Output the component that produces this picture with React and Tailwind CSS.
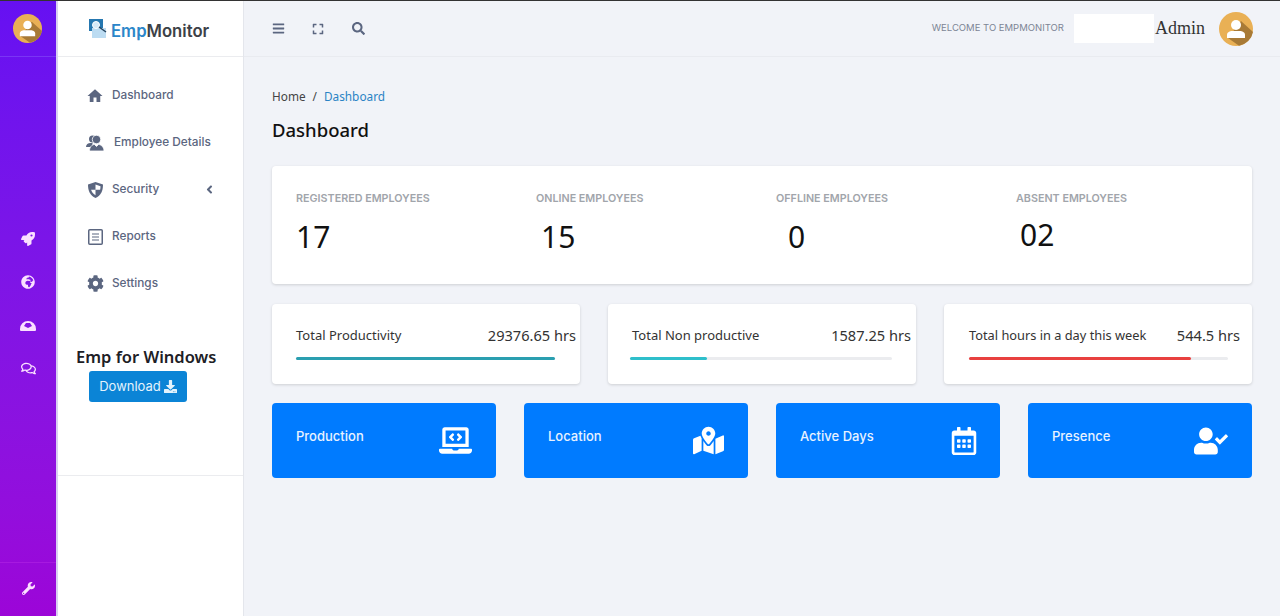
import {
    FaAngleLeft, FaBars, FaCog, FaDownload, FaExpand, FaGlobeAfrica, FaLaptopCode,
    FaMapMarkedAlt, FaRegCalendarAlt, FaRegComments, FaRocket, FaSearch,
    FaUserCheck, FaWrench,
} from 'react-icons/fa'
import { MdHome } from 'react-icons/md'

function Avatar({ size }) {
    return (
        <svg width={size} height={size} viewBox="0 0 34 34" className="shrink-0">
            <circle cx="17" cy="17" r="17" fill="#e9b055" />
            <path d="M9 26 L22 9 L34 20 A17 17 0 0 1 20 33.700 Z" fill="#a87a36" />
            <circle cx="17" cy="13" r="5" fill="#fff" />
            <path d="M8 26 v-3 c0-3 3-4 5-4 h8 c2 0 5 1 5 4 v3 z" fill="#fff" />
        </svg>
    )
}

function Logo() {
    return (
        <svg width="18" height="20" viewBox="0 0 18 20" className="shrink-0">
            <rect x="0" y="0" width="14" height="12" fill="#2577b0" />
            <rect x="3" y="9" width="14" height="10" fill="#bcdcf2" />
            <circle cx="7" cy="6" r="3.500" fill="#d5e9f7" stroke="#fff" />
            <path d="M10 8 L17 13" stroke="#24435e" strokeWidth="1.500" />
        </svg>
    )
}

function ShieldIcon() {
    return (
        <svg width="15" height="16" viewBox="0 0 15 16">
            <path d="M7.500 0 L15 2.500 C15 9 13 13.500 7.500 16 C2 13.500 0 9 0 2.500 Z" fill="currentColor" />
            <path d="M7.500 2.500 L12.500 4.200 C12.500 5.500 12.400 6.700 12.100 7.800 H7.500 Z M7.500 7.800 V13.300 C5 11.900 3.700 10 3.100 7.800 Z" fill="#fff" />
        </svg>
    )
}

function ReportIcon() {
    return (
        <svg width="15" height="16" viewBox="0 0 15 16" fill="none" stroke="currentColor">
            <rect x="0.750" y="0.750" width="13.500" height="14.500" rx="1" strokeWidth="1.500" />
            <path d="M4 5 H11 M4 8 H11 M4 11 H11" strokeWidth="1.200" />
        </svg>
    )
}

function EmployeeIcon() {
    return (
        <svg width="18" height="17" viewBox="0 0 18 17" fill="currentColor">
            <circle cx="6.500" cy="5" r="3.500" />
            <path d="M0 13 c0-2.500 2-4 4.500-4 h2 v4 z" />
            <circle cx="10.500" cy="5.500" r="4.200" stroke="#fff" strokeWidth="0.800" />
            <path d="M3.500 17 c0-4 2.500-6.500 5-6.500 l2 2 l2 -2 c2.500 0 5.500 2.500 5.500 6.500 z" stroke="#fff" strokeWidth="0.800" />
        </svg>
    )
}

function NavItem({ icon, label, gap, chevron }) {
    return (
        <div className="flex items-center h-[47px] pl-[28px] pr-[27px] text-[#5b6680]">
            <div className="w-[18px] flex justify-center text-[15px] shrink-0">{icon}</div>
            <span className={`${gap} whitespace-nowrap text-[11.800px] font-medium`}>{label}</span>
            {chevron && <FaAngleLeft className="ml-auto text-[13px]" />}
        </div>
    )
}

function Stat({ title, value, valueClass }) {
    return (
        <div>
            <div className="whitespace-nowrap text-[10.750px] font-semibold text-[#a1a5ab] uppercase">{title}</div>
            <div className={`${valueClass} text-[30px] leading-[40px] text-[#111] font-['Noto_Sans',sans-serif]`}>{value}</div>
        </div>
    )
}

function HoursCard({ title, hours, bar, width, pad, track, titleSize }) {
    return (
        <div className={`min-w-0 h-20 bg-white rounded-sm shadow-[0_1px_3px_rgba(0,0,0,0.15)] pt-[21px] ${pad}`}>
            <div className="flex justify-between items-center h-[22px] font-['Noto_Sans',sans-serif] text-[#333]">
                <span className={`${titleSize} whitespace-nowrap`}>{title}</span>
                <span className="text-[14.600px] whitespace-nowrap">{hours}</span>
            </div>
            <div className={`mt-[10px] h-[3px] bg-[#ebecef] rounded-full ${track}`}>
                <div className={`h-full rounded-full ${bar} ${width}`}></div>
            </div>
        </div>
    )
}

function BlueCard({ label, icon }) {
    return (
        <div className="min-w-0 h-[75px] bg-[#007bff] rounded-sm flex items-center justify-between pl-6 pr-6 text-white">
            <span className="mb-2 text-[13px] font-medium text-[#e8f2ff]">{label}</span>
            {icon}
        </div>
    )
}

export default function App() {
    return (
        <div className="flex h-[616px] w-[1280px] overflow-hidden border-t border-[#333] bg-[#f1f3f8] font-['Inter',sans-serif]">
            <div className="w-[58px] shrink-0 flex flex-col bg-gradient-to-b from-[#6610f2] to-[#9c05d8] border-r-2 border-[#d9d0f2] text-[#fbe0ff]">
                <div className="h-[56px] flex items-center justify-center pr-[2px] border-b border-[#7a35f5]">
                    <Avatar size={29} />
                </div>
                <div className="mt-[175px] flex flex-col items-center gap-[29px] text-[14px]">
                    <FaRocket />
                    <FaGlobeAfrica />
                    <svg width="16" height="14" viewBox="0 0 16 14">
                        <path d="M0 11 a8 8 0 0 1 16 0 v1 a1 1 0 0 1-1 1 h-14 a1 1 0 0 1-1-1 z M4 8 l4 2 l4 -2 l-2 -3 h-4 z" fill="currentColor" fillRule="evenodd" />
                    </svg>
                    <FaRegComments className="text-[15px]" />
                </div>
                <div className="mt-auto h-[54px] pt-[19px] flex justify-center border-t border-[#a71ae0] text-[13px]">
                    <FaWrench />
                </div>
            </div>

            <div className="w-[186px] shrink-0 flex flex-col bg-white border-r border-[#e4e6ec]">
                <div className="h-[56px] flex items-center gap-[4px] pl-[31px] border-b border-[#ebecef] text-[16.700px] font-semibold">
                    <Logo />
                    <span className="mt-[6px]"><span className="text-[#2b86c9]">Emp</span><span className="text-[#3c4147]">Monitor</span></span>
                </div>
                <div className="pt-[15px]">
                    <NavItem icon={<MdHome className="text-[18px]" />} label="Dashboard" gap="ml-2" />
                    <NavItem icon={<EmployeeIcon />} label="Employee Details" gap="ml-[10px]" />
                    <NavItem icon={<ShieldIcon />} label="Security" gap="ml-2" chevron />
                    <NavItem icon={<ReportIcon />} label="Reports" gap="ml-2" />
                    <NavItem icon={<FaCog className="text-[17px]" />} label="Settings" gap="ml-2" />
                </div>
                <div className="mt-[39px] pl-[18px] whitespace-nowrap font-['Noto_Sans',sans-serif] text-[16.500px] leading-[22px] font-semibold text-[#1d2025]">Emp for Windows</div>
                <button className="mt-[3px] ml-[31px] w-[98px] h-[31px] bg-[#0b84d6] rounded-[3px] flex items-center justify-center gap-[3px] text-[13px] text-[#e4f3fc]">
                    Download <FaDownload className="text-[13px]" />
                </button>
                <div className="mt-[73px] border-t border-[#ebecef]"></div>
            </div>

            <div className="flex-1 min-w-0 flex flex-col">
                <div className="h-[56px] shrink-0 flex items-center pl-[28px] pr-[27px] border-b border-[#e9ebf0] text-[#5b6680]">
                    <FaBars className="text-[13px]" />
                    <FaExpand className="ml-[27px] text-[12px]" />
                    <FaSearch className="ml-[28px] text-[13px]" />
                    <span className="ml-auto text-[9.500px] text-[#7d8595]">WELCOME TO EMPMONITOR</span>
                    <div className="ml-[10px] w-[80px] h-[29px] bg-white"></div>
                    <span className="ml-[1px] mr-[14px] text-[18px] text-[#333] font-['Liberation_Serif',serif]">Admin</span>
                    <Avatar size={34} />
                </div>

                <div className="px-[28px] flex flex-col">
                    <div className="mt-[30px] h-5 flex items-center gap-[7px] font-['Noto_Sans',sans-serif] text-[11.800px] text-[#444]">
                        <span>Home</span>
                        <span>/</span>
                        <span className="text-[#2a83c5]">Dashboard</span>
                    </div>
                    <div className="mt-[9px] text-[18.500px] leading-7 font-['Noto_Sans',sans-serif] font-medium text-[#111]">Dashboard</div>

                    <div className="mt-[22px] h-[118px] bg-white rounded-sm shadow-[0_1px_3px_rgba(0,0,0,0.15)] pl-6 pt-[25px] grid grid-cols-[240px_240px_240px_1fr]">
                        <Stat title="Registered Employees" value="17" valueClass="mt-[10px]" />
                        <Stat title="Online Employees" value="15" valueClass="mt-[10px] ml-[5px]" />
                        <Stat title="Offline Employees" value="0" valueClass="mt-[10px] ml-[12px]" />
                        <Stat title="Absent Employees" value="02" valueClass="mt-2 ml-[4px]" />
                    </div>

                    <div className="mt-5 grid grid-cols-3 gap-[28px]">
                        <HoursCard title="Total Productivity" hours="29376.65 hrs" bar="bg-[#2a9fb0]" width="w-full" pad="pl-6 pr-[4px]" track="w-[259px]" titleSize="text-[13px]" />
                        <HoursCard title="Total Non productive" hours="1587.25 hrs" bar="bg-[#2ebfcb]" width="w-[77px]" pad="pl-6 pr-[5px]" track="w-[262px] -ml-[2px]" titleSize="text-[13px]" />
                        <HoursCard title="Total hours in a day this week" hours="544.5 hrs" bar="bg-[#e8403f]" width="w-[222px]" pad="pl-[25px] pr-3" track="w-[259px]" titleSize="text-[12.800px]" />
                    </div>

                    <div className="mt-[19px] grid grid-cols-4 gap-[28px]">
                        <BlueCard label="Production" icon={<FaLaptopCode className="text-[33px]" />} />
                        <BlueCard label="Location" icon={<FaMapMarkedAlt className="text-[31px]" />} />
                        <BlueCard label="Active Days" icon={<FaRegCalendarAlt className="text-[28px] -mr-[2px]" />} />
                        <BlueCard label="Presence" icon={<FaUserCheck className="text-[34px]" />} />
                    </div>
                </div>
            </div>
        </div>
    )
}
